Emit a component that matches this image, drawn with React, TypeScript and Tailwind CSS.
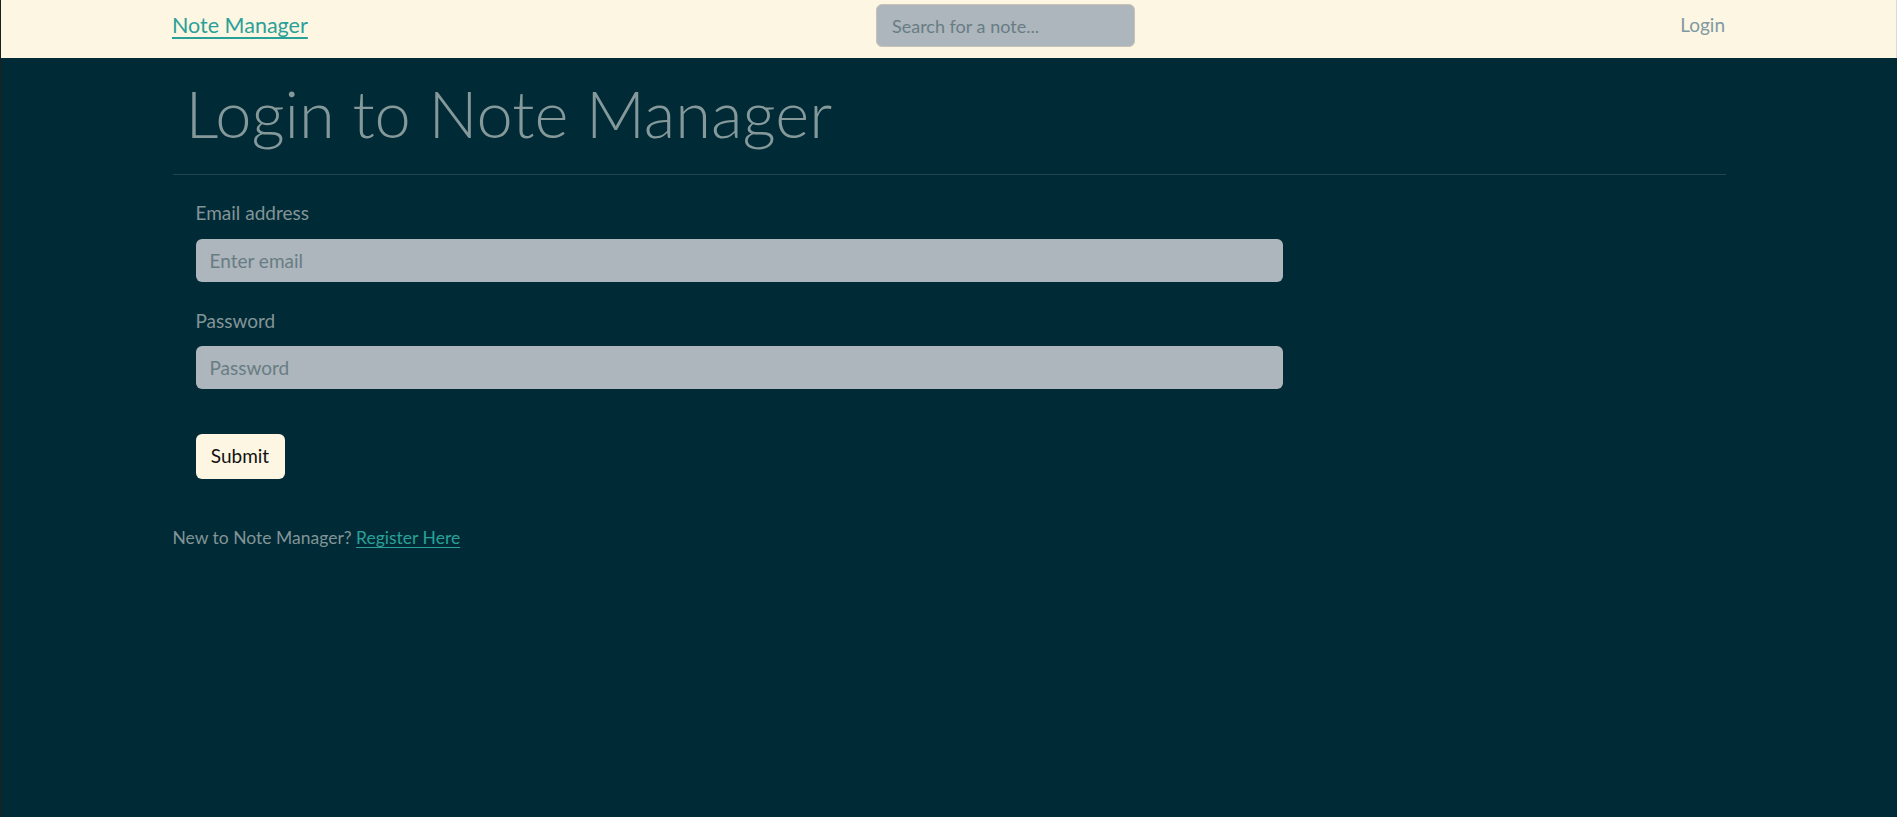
import React from "react";

const bodyFont = { fontFamily: "Lato, 'Noto Sans', sans-serif" };

function NavBar() {
    return (
        <nav className="bg-[#fdf6e3] h-[58px] pb-[7px] border-r border-[#d9d9d9]">
            <div className="w-[1553px] mx-auto h-full flex items-center">
                <div className="w-[704px]">
                    <a
                        href="#"
                        className="text-[21.5px] text-[#2aa198] underline underline-offset-[4px] decoration-[1.5px]"
                    >
                        Note Manager
                    </a>
                </div>
                <input
                    type="text"
                    placeholder="Search for a note..."
                    className="
                        w-[259px]
                        h-[43px]
                        rounded-[6px]
                        border
                        border-[#c8c3b6]
                        bg-[#adb5bd]
                        px-[15px]
                        text-[18px]
                        text-[#002b36]
                        placeholder:text-[#687d83]
                        outline-none
                    "
                />
                <a href="#" className="ml-auto text-[19px] text-[#7f9aa2]">
                    Login
                </a>
            </div>
        </nav>
    );
}

function Field({ label, placeholder, type }: { label: string; placeholder: string; type: string }) {
    return (
        <div>
            <label className="block text-[19px] leading-[28.5px] text-[#839496]">{label}</label>
            <input
                type={type}
                placeholder={placeholder}
                className="
                    mt-[11px]
                    block
                    w-[1087px]
                    h-[43px]
                    rounded-[6px]
                    bg-[#adb5bd]
                    pl-[14px]
                    text-[19px]
                    text-[#002b36]
                    placeholder:text-[#687d83]
                    outline-none
                "
            />
        </div>
    );
}

export default function App() {
    return (
        <div className="min-h-screen bg-[#002b36] border-l border-[#1e1e1e]" style={bodyFont}>
            <NavBar />

            <main className="w-[1553px] mx-auto">
                <h1
                    className="
                        mt-[16px]
                        pl-[13px]
                        text-[65px]
                        leading-[1.2]
                        font-light
                        text-[#85999b]
                    "
                >
                    Login to Note Manager
                </h1>

                <hr className="mt-[22px] border-t border-[#21454e]" />

                <form className="pl-[23px] pt-[24px] flex flex-col gap-[25px]">
                    <Field label="Email address" placeholder="Enter email" type="email" />
                    <Field label="Password" placeholder="Password" type="password" />

                    <div className="pt-[20px]">
                        <button
                            type="button"
                            className="
                                w-[89px]
                                h-[45px]
                                rounded-[6px]
                                bg-[#fdf6e3]
                                text-[19px]
                                text-[#111]
                            "
                        >
                            Submit
                        </button>
                    </div>
                </form>

                <p className="mt-[45px] text-[17.5px] leading-[28.5px] text-[#839496]">
                    New to Note Manager?{" "}
                    <a href="#" className="text-[#2aa198] underline underline-offset-[3px]">
                        Register Here
                    </a>
                </p>
            </main>
        </div>
    );
}
